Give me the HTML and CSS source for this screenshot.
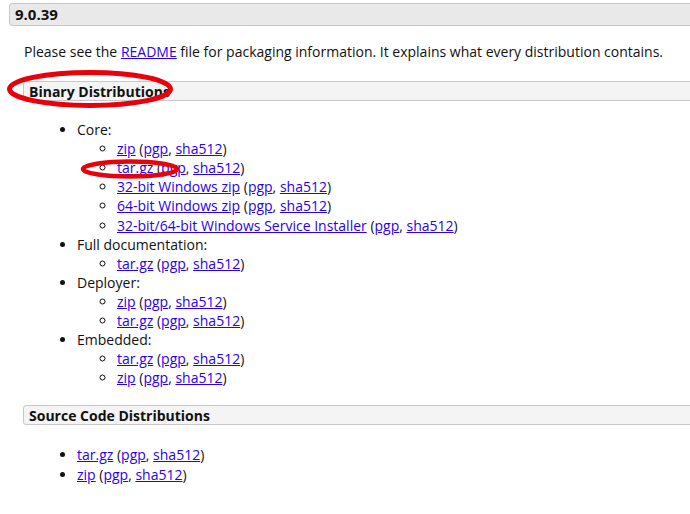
FILE: index.html
```html
<!DOCTYPE html>
<html>
<head>
<meta charset="utf-8">
<link rel="stylesheet" href="styles.css">
</head>
<body>
<div class="page">
  <h3 class="version">9.0.39</h3>
  <div class="text">
    <p class="intro">Please see the <a href="#">README</a> file for packaging information. It explains what every distribution contains.</p>

    <h4 class="section">Binary Distributions</h4>
    <ul class="list">
      <li>Core:
        <ul class="sub">
          <li><a href="#">zip</a> (<a href="#">pgp</a>, <a href="#">sha512</a>)</li>
          <li><a href="#">tar.gz</a> (<a href="#">pgp</a>, <a href="#">sha512</a>)</li>
          <li><a href="#">32-bit Windows zip</a> (<a href="#">pgp</a>, <a href="#">sha512</a>)</li>
          <li><a href="#">64-bit Windows zip</a> (<a href="#">pgp</a>, <a href="#">sha512</a>)</li>
          <li><a href="#">32-bit/64-bit Windows Service Installer</a> (<a href="#">pgp</a>, <a href="#">sha512</a>)</li>
        </ul>
      </li>
      <li>Full documentation:
        <ul class="sub">
          <li><a href="#">tar.gz</a> (<a href="#">pgp</a>, <a href="#">sha512</a>)</li>
        </ul>
      </li>
      <li>Deployer:
        <ul class="sub">
          <li><a href="#">zip</a> (<a href="#">pgp</a>, <a href="#">sha512</a>)</li>
          <li><a href="#">tar.gz</a> (<a href="#">pgp</a>, <a href="#">sha512</a>)</li>
        </ul>
      </li>
      <li>Embedded:
        <ul class="sub">
          <li><a href="#">tar.gz</a> (<a href="#">pgp</a>, <a href="#">sha512</a>)</li>
          <li><a href="#">zip</a> (<a href="#">pgp</a>, <a href="#">sha512</a>)</li>
        </ul>
      </li>
    </ul>

    <h4 class="section source">Source Code Distributions</h4>
    <ul class="list">
      <li><a href="#">tar.gz</a> (<a href="#">pgp</a>, <a href="#">sha512</a>)</li>
      <li><a href="#">zip</a> (<a href="#">pgp</a>, <a href="#">sha512</a>)</li>
    </ul>
  </div>

  <svg class="mark mark-big" width="174" height="44" viewBox="0 0 174 44" aria-hidden="true">
    <ellipse cx="86" cy="22" rx="80.5" ry="16.5" fill="none" stroke="#e8000b" stroke-width="5"/>
  </svg>
  <svg class="mark mark-small" width="104" height="24" viewBox="0 0 104 24" aria-hidden="true">
    <ellipse cx="52" cy="12" rx="47" ry="7.5" fill="none" stroke="#e8000b" stroke-width="4.5"/>
  </svg>
</div>
</body>
</html>
```

FILE: styles.css
```css
html, body {
  margin: 0;
  padding: 0;
  background: #fff;
  overflow: hidden;
}

.page {
  position: relative;
  font-family: "Open Sans", "Liberation Sans", sans-serif;
  font-size: 14px;
  line-height: 19.1px;
  color: #111;
  padding-top: 3px;
}

a {
  color: #2a00ee;
  text-decoration: underline;
}

.version {
  margin: 0 -20px 0 9px;
  height: 21px;
  padding: 0 0 0 5px;
  background: #e9e9e9;
  border: 1px solid #c8c8c8;
  border-radius: 3px;
  font-size: 15px;
  font-weight: bold;
  line-height: 21px;
}

.text {
  padding-left: 23px;
}

.intro {
  margin: 16px 0 0 1px;
}

.section {
  margin: 20px -20px 0 0;
  height: 18px;
  padding: 0 0 0 5px;
  background: #f4f4f4;
  border: 1px solid #c8c8c8;
  border-radius: 3px;
  font-size: 14px;
  font-weight: bold;
  line-height: 19px;
}

.section.source {
  margin-top: 18px;
}

.list {
  margin: 19px 0 0 0;
  padding-left: 54px;
  list-style: disc;
}

.sub {
  margin: 0;
  padding-left: 40px;
  list-style: circle;
}

.source + .list {
  margin-top: 20px;
}

.mark {
  position: absolute;
  pointer-events: none;
}

.mark-big {
  left: 4px;
  top: 67px;
}

.mark-small {
  left: 78px;
  top: 157px;
}
```
